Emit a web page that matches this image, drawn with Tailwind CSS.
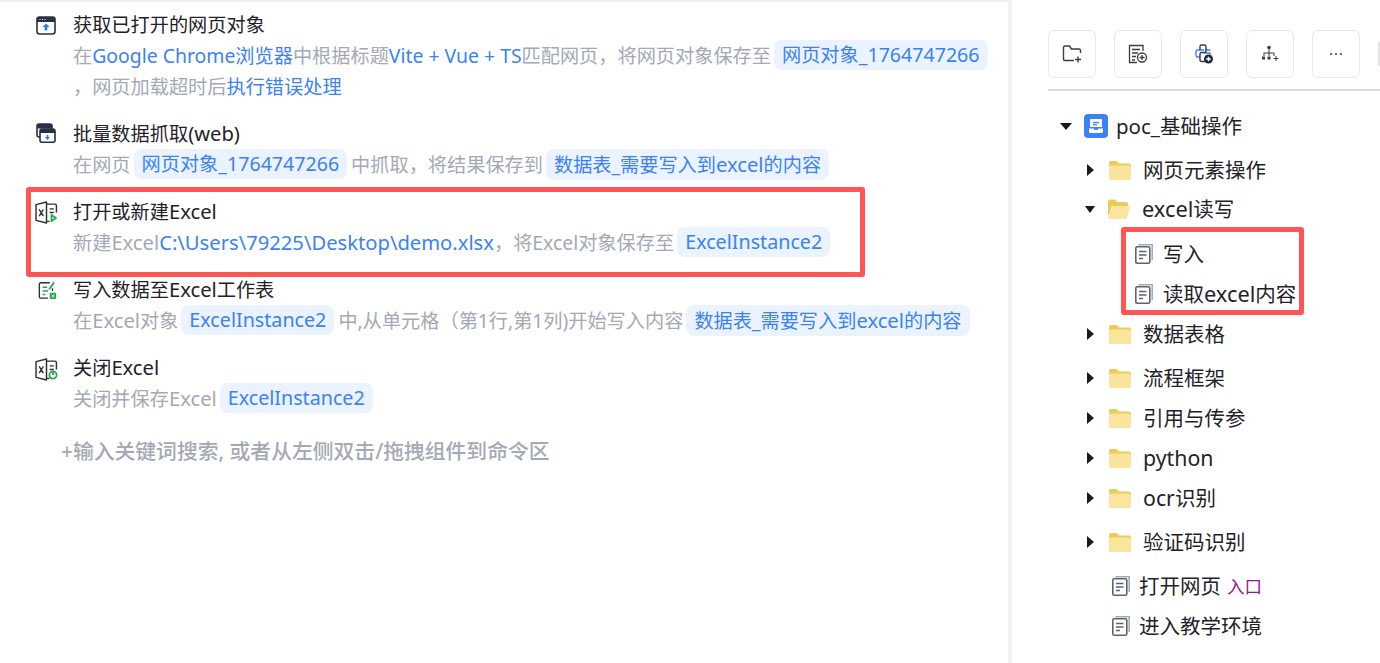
<!DOCTYPE html>
<html lang="en">
<head>
    <meta charset="UTF-8">
    <title>流程编辑器</title>
    <script src="https://cdn.jsdelivr.net/npm/@tailwindcss/browser@4"></script>
</head>
<body class="bg-white overflow-hidden font-['Noto_Sans','Noto_Sans_CJK_SC',sans-serif]">
    <svg width="0" height="0" class="absolute">
        <defs>
            <symbol id="folder" viewBox="0 0 22 20">
                <path d="M0 3a2 2 0 0 1 2-2h6l2 2.500h10a2 2 0 0 1 2 2V7H0z" fill="#ecca5c"/>
                <path d="M0 5.500h20a2 2 0 0 1 2 2V18a2 2 0 0 1-2 2H2a2 2 0 0 1-2-2z" fill="#fbe49c"/>
            </symbol>
            <symbol id="folderOpen" viewBox="0 0 22 20">
                <path d="M0 2.500a2 2 0 0 1 2-2h5l2 2.500h9a2 2 0 0 1 2 2V7H4L1 16H0z" fill="#ecca5c"/>
                <path d="M5 7h15.500a1.500 1.500 0 0 1 1.400 2L19 18.500a2 2 0 0 1-2 1.500H0z" fill="#fbe49c"/>
            </symbol>
            <symbol id="doc" viewBox="0 0 18 20">
                <path d="M3.500.8h13.700V16" fill="none" stroke="#a2a8b0" stroke-width="1.500"/>
                <rect x=".8" y="2.800" width="14" height="16.400" rx="1.500" fill="#fff" stroke="#5b6470" stroke-width="1.600"/>
                <path d="M4 7.500h7.500M4 11h7.500M4 14.500h4" stroke="#5b6470" stroke-width="1.300"/>
            </symbol>
            <symbol id="excelBook" viewBox="0 0 22 22">
                <path d="M1 3.500 11 1v20L1 18.500z" fill="#fff" stroke="#2b2f36" stroke-width="1.400" stroke-linejoin="round"/>
                <path d="M11 3h8a1.500 1.500 0 0 1 1.500 1.500V11M11 19.500h3" fill="none" stroke="#2b2f36" stroke-width="1.400"/>
                <path d="m4 8 4 6.500M8 8l-4 6.500M14 7.500h4M14 11h4" fill="none" stroke="#2b2f36" stroke-width="1.300"/>
            </symbol>
        </defs>
    </svg>

    <div class="flex h-[663px] w-[1380px]">
        <!-- command list -->
        <div class="relative w-[1008px] shrink-0 border-t-2 border-[#eeeff2] text-[19.200px]">
            <div class="pl-[73px] pr-3 pt-[8px] leading-[31px]">
                <div class="relative pb-[16px]">
                    <svg class="absolute -left-[37px] top-[6px]" width="20" height="20" viewBox="0 0 20 20">
                        <rect x="1" y="1" width="18" height="17" rx="2.500" fill="#fff" stroke="#2b2f45" stroke-width="1.600"/>
                        <path d="M1 2.500a1.500 1.500 0 0 1 1.500-1.500h15a1.500 1.500 0 0 1 1.500 1.500V6H1z" fill="#2b2f45"/>
                        <path d="M3.500 3.500h1M6 3.500h1M8.500 3.500h1" stroke="#fff"/>
                        <path d="m10 7.500 3.500 3.500H11.300v3.500H8.700V11H6.500z" fill="#1f7cf6"/>
                    </svg>
                    <div class="text-[#1f2329] h-[30px] leading-[30px]">获取已打开的网页对象</div>
                    <div class="whitespace-nowrap text-[#a3a9b5]">在<span class="text-[#3b82f6]"><span class="text-[19.400px]">Google Chrome</span>浏览器</span>中根据标题<span class="text-[#3b82f6] text-[19.400px]">Vite + Vue + TS</span>匹配网页，将网页对象保存至<span class="ml-[3px] mr-[4px] inline-block align-top rounded-lg bg-[#eaf3ff] px-2 text-[#3b82f6] leading-[30px]">网页对象<span class="text-[19.600px]">_1764747266</span></span></div>
                    <div class="text-[#a3a9b5]">，网页加载超时后<span class="text-[#3b82f6]">执行错误处理</span></div>
                </div>
                <div class="relative pb-[16px]">
                    <svg class="absolute -left-[37px] top-[5px]" width="20" height="20" viewBox="0 0 20 20">
                        <rect x="1" y="1" width="15" height="13" rx="2" fill="#fff" stroke="#2b2f45" stroke-width="1.600"/>
                        <path d="M1 3a2 2 0 0 1 2-2h11a2 2 0 0 1 2 2v2.500H1z" fill="#2b2f45"/>
                        <rect x="4" y="6" width="15" height="13.200" rx="2" fill="#fff" stroke="#2b2f45" stroke-width="1.600"/>
                        <path d="M4 8a2 2 0 0 1 2-2h11a2 2 0 0 1 2 2v2H4z" fill="#2b2f45"/>
                        <path d="m11.500 17-2.500-3h1.700v-2h1.600v2H14z" fill="#1f7cf6"/>
                    </svg>
                    <div class="text-[#1f2329] h-[31px] leading-[30px]">批量数据抓取<span class="text-[20.200px]">(web)</span></div>
                    <div class="text-[#a3a9b5]">在网页<span class="ml-[3px] mr-[4px] inline-block align-top rounded-lg bg-[#eaf3ff] px-2 text-[#3b82f6] leading-[30px]">网页对象<span class="text-[19.600px]">_1764747266</span></span>中抓取，将结果保存到<span class="ml-[3px] mr-[4px] inline-block align-top rounded-lg bg-[#eaf3ff] px-2 text-[#3b82f6] leading-[30px]">数据表_需要写入到<span class="text-[20.200px]">excel</span>的内容</span></div>
                </div>
                <div class="relative pb-[16px]">
                    <svg class="absolute -left-[38px] top-[5px]" width="23" height="23" viewBox="0 0 23 23">
                        <use href="#excelBook"/>
                        <path d="M16.500 14v6l4.500-3z" fill="#fff" stroke="#22a94f" stroke-width="1.800" stroke-linejoin="round"/>
                    </svg>
                    <div class="text-[#1f2329] h-[31px] leading-[30px]">打开或新建<span class="text-[20.200px]">Excel</span></div>
                    <div class="text-[#a3a9b5]">新建<span class="text-[20.200px]">Excel</span><span class="text-[#3b82f6] text-[20.200px]">C:\Users\79225\Desktop\demo.xlsx</span>，将<span class="text-[19.400px]">Excel</span>对象保存至<span class="ml-[3px] mr-[4px] inline-block align-top rounded-lg bg-[#eaf3ff] px-2 text-[#3b82f6] leading-[30px] text-[19.700px]">ExcelInstance2</span></div>
                </div>
                <div class="relative pb-[16px]">
                    <svg class="absolute -left-[35px] top-[6px]" width="19" height="20" viewBox="0 0 21 22">
                        <path d="M13 3H3a1.500 1.500 0 0 0-1.500 1.500v14A1.500 1.500 0 0 0 3 20h8M16 9v3" fill="none" stroke="#2b2f36" stroke-width="1.500"/>
                        <path d="M5 8h5M5 12h6M5 16h3" stroke="#22a94f" stroke-width="1.600"/>
                        <path d="m12 9 5-7 1.500 1.200-5 7-2 .8z" fill="#22a94f"/>
                        <rect x="13" y="14" width="7" height="7" rx="1" fill="#22a94f"/>
                        <path d="m15 16 3 3.200m0-3.200-3 3.200" stroke="#fff"/>
                    </svg>
                    <div class="text-[#1f2329] h-[31px] leading-[30px]">写入数据至<span class="text-[20.200px]">Excel</span>工作表</div>
                    <div class="text-[#a3a9b5]">在<span class="text-[20.200px]">Excel</span>对象<span class="ml-[3px] mr-[4px] inline-block align-top rounded-lg bg-[#eaf3ff] px-2 text-[#3b82f6] leading-[30px] text-[19.700px]">ExcelInstance2</span>中,从单元格（第1行,第1列)开始写入内容<span class="ml-[3px] mr-[4px] inline-block align-top rounded-lg bg-[#eaf3ff] px-2 text-[#3b82f6] leading-[30px]">数据表_需要写入到<span class="text-[20.200px]">excel</span>的内容</span></div>
                </div>
                <div class="relative pb-[16px]">
                    <svg class="absolute -left-[38px] top-[6px]" width="23" height="23" viewBox="0 0 23 23">
                        <use href="#excelBook"/>
                        <circle cx="18" cy="17" r="3.600" fill="#fff" stroke="#22a94f" stroke-width="1.800"/>
                        <path d="M18 13v4" stroke="#22a94f" stroke-width="1.800"/>
                    </svg>
                    <div class="text-[#1f2329] h-[31px] leading-[30px]">关闭<span class="text-[20.200px]">Excel</span></div>
                    <div class="text-[#a3a9b5]">关闭并保存<span class="text-[20.200px]">Excel</span><span class="ml-[3px] mr-[4px] inline-block align-top rounded-lg bg-[#eaf3ff] px-2 text-[#3b82f6] leading-[30px] text-[19.700px]">ExcelInstance2</span></div>
                </div>
            </div>
            <div class="pl-[61px] pt-[6px] text-[20.800px] font-medium text-[#a3a9b5] leading-[31px]">+输入关键词搜索, 或者从左侧双击/拖拽组件到命令区</div>

            <!-- highlight box -->
            <div class="absolute left-[26px] top-[185px] h-[90px] w-[839px] rounded-[3px] border-[5px] border-[#ff5555]"></div>
        </div>

        <div class="w-[4px] shrink-0 bg-[#f3f3f3]"></div>

        <!-- project tree -->
        <div class="relative min-w-0 flex-1 pl-[36px] pt-[30px]">
            <div class="flex gap-[18px] border-b-2 border-[#dcdcdc] pb-[11px] w-[332px] overflow-hidden">
                <div class="flex h-[48px] w-[48px] shrink-0 items-center justify-center rounded-md border border-[#e8e8e8]">
                    <svg width="20" height="20" viewBox="0 0 20 20" fill="none" stroke="#3a3d42" stroke-width="1.400"><path d="M18.500 9V6.500a1.500 1.500 0 0 0-1.500-1.500H9.500L7.500 2H3a1.500 1.500 0 0 0-1.500 1.500V15A1.500 1.500 0 0 0 3 16.500h9"/><path d="M16 12.500v6M13 15.500h6"/></svg>
                </div>
                <div class="flex h-[48px] w-[48px] shrink-0 items-center justify-center rounded-md border border-[#e8e8e8]">
                    <svg width="20" height="20" viewBox="0 0 20 20" fill="none" stroke="#3a3d42" stroke-width="1.300"><path d="M15 7V1.500H1.500v17H9"/><path d="M4 5.500h8M4 9h6M4 12.500h4M4 16h3"/><circle cx="14" cy="13.500" r="4.500"/><path d="M14 11v5M11.500 13.500h5"/></svg>
                </div>
                <div class="flex h-[48px] w-[48px] shrink-0 items-center justify-center rounded-md border border-[#e8e8e8]">
                    <svg width="20" height="20" viewBox="0 0 20 20" fill="none" stroke-width="1.400"><path d="M10 6H3.500A1.500 1.500 0 0 0 2 7.500v4A1.500 1.500 0 0 0 3.500 13H6" stroke="#3b82f6"/><path d="M10 9h5a1.500 1.500 0 0 1 1.500 1.500M11 6h5.500" stroke="#3b82f6"/><path d="M6 6V2.500A1.500 1.500 0 0 1 7.500 1h3A1.500 1.500 0 0 1 12 2.500V7a1.500 1.500 0 0 1-1.500 1.500h-3A1.500 1.500 0 0 0 6 10v6a1.500 1.500 0 0 0 1.500 1.500H11" stroke="#3a3d42"/><circle cx="14.500" cy="15" r="4.500" fill="#25282c"/><path d="M14.500 12.700v4.600M12.200 15h4.600" stroke="#fff"/></svg>
                </div>
                <div class="flex h-[48px] w-[48px] shrink-0 items-center justify-center rounded-md border border-[#e8e8e8]">
                    <svg width="18" height="18" viewBox="0 0 18 18" fill="#3a3d42"><circle cx="8" cy="2.500" r="1.800"/><path d="M7.500 4h1v3.500h-1zM2.500 7.500h11v1h-11zM2.500 8h1v3h-1zM7.500 8h1v3h-1zM12.500 8h1v3h-1z"/><rect x="1" y="11.500" width="3" height="3" rx=".5"/><rect x="6.500" y="11.500" width="3" height="3" rx=".5"/><path d="M12.500 13h5v1h-5z"/><path d="M14.500 11h1v5h-1z"/></svg>
                </div>
                <div class="flex h-[48px] w-[48px] shrink-0 items-center justify-center rounded-md border border-[#e8e8e8]">
                    <svg width="14" height="4" viewBox="0 0 14 4" fill="#3a3d42"><circle cx="2" cy="2" r="1"/><circle cx="7" cy="2" r="1"/><circle cx="12" cy="2" r="1"/></svg>
                </div>
                <div class="mt-3 h-[24px] w-[4px] shrink-0 bg-[#e4e4e4]"></div>
            </div>

            <div class="pl-[10px] pt-[17px] text-[20.500px] text-[#1f2329] whitespace-nowrap">
                <div class="mb-[8px] flex h-[36px] items-center">
                    <span class="ml-[2px] h-0 w-0 border-x-[6px] border-t-[7px] border-x-transparent border-t-[#1a1a1a]"></span>
                    <span class="ml-[12px] flex h-[24px] w-[24px] items-center justify-center rounded-[4px] bg-[#3b82f6]">
                        <svg width="16" height="16" viewBox="0 0 16 16" fill="#fff"><path d="M3 1h10a1 1 0 0 1 1 1v7H2V2a1 1 0 0 1 1-1z"/><path d="M1 10.500h4.500l1 1.500h3l1-1.500H15V14a1 1 0 0 1-1 1H2a1 1 0 0 1-1-1z"/><path d="M5 4h6v1.200H5zM5 6.300h4v1.200H5z" fill="#3b82f6"/></svg>
                    </span>
                    <span class="ml-[8px]">poc_基础操作</span>
                </div>
                <div class="mb-[3px] flex h-[36px] items-center pl-[29px]">
                    <span class="h-0 w-0 border-y-[6px] border-l-[7px] border-y-transparent border-l-[#1a1a1a]"></span>
                    <svg class="ml-[15px]" width="22" height="20"><use href="#folder"/></svg>
                    <span class="ml-[12px]">网页元素操作</span>
                </div>
                <div class="mb-[9px] flex h-[36px] items-center pl-[27px]">
                    <span class="h-0 w-0 border-x-[5.500px] border-t-[7px] border-x-transparent border-t-[#1a1a1a]"></span>
                    <svg class="ml-[13px]" width="22" height="20"><use href="#folderOpen"/></svg>
                    <span class="ml-[12px]"><span class="text-[21.800px]">excel</span>读写</span>
                </div>
                <div class="mb-[4px] flex h-[36px] items-center pl-[77px]">
                    <svg width="18" height="20"><use href="#doc"/></svg>
                    <span class="ml-[10px]">写入</span>
                </div>
                <div class="mb-[4px] flex h-[36px] items-center pl-[77px]">
                    <svg width="18" height="20"><use href="#doc"/></svg>
                    <span class="ml-[10px]">读取<span class="text-[21.800px]">excel</span>内容</span>
                </div>
                <div class="mb-[8px] flex h-[36px] items-center pl-[29px]">
                    <span class="h-0 w-0 border-y-[6px] border-l-[7px] border-y-transparent border-l-[#1a1a1a]"></span>
                    <svg class="ml-[15px]" width="22" height="20"><use href="#folder"/></svg>
                    <span class="ml-[12px]">数据表格</span>
                </div>
                <div class="mb-[4px] flex h-[36px] items-center pl-[29px]">
                    <span class="h-0 w-0 border-y-[6px] border-l-[7px] border-y-transparent border-l-[#1a1a1a]"></span>
                    <svg class="ml-[15px]" width="22" height="20"><use href="#folder"/></svg>
                    <span class="ml-[12px]">流程框架</span>
                </div>
                <div class="mb-[4px] flex h-[36px] items-center pl-[29px]">
                    <span class="h-0 w-0 border-y-[6px] border-l-[7px] border-y-transparent border-l-[#1a1a1a]"></span>
                    <svg class="ml-[15px]" width="22" height="20"><use href="#folder"/></svg>
                    <span class="ml-[12px]">引用与传参</span>
                </div>
                <div class="mb-[4px] flex h-[36px] items-center pl-[29px]">
                    <span class="h-0 w-0 border-y-[6px] border-l-[7px] border-y-transparent border-l-[#1a1a1a]"></span>
                    <svg class="ml-[15px]" width="22" height="20"><use href="#folder"/></svg>
                    <span class="ml-[12px] text-[21.300px]">python</span>
                </div>
                <div class="mb-[8px] flex h-[36px] items-center pl-[29px]">
                    <span class="h-0 w-0 border-y-[6px] border-l-[7px] border-y-transparent border-l-[#1a1a1a]"></span>
                    <svg class="ml-[15px]" width="22" height="20"><use href="#folder"/></svg>
                    <span class="ml-[12px]"><span class="text-[21.300px]">ocr</span>识别</span>
                </div>
                <div class="mb-[8px] flex h-[36px] items-center pl-[29px]">
                    <span class="h-0 w-0 border-y-[6px] border-l-[7px] border-y-transparent border-l-[#1a1a1a]"></span>
                    <svg class="ml-[15px]" width="22" height="20"><use href="#folder"/></svg>
                    <span class="ml-[12px]">验证码识别</span>
                </div>
                <div class="mb-[4px] flex h-[36px] items-center pl-[54px]">
                    <svg width="18" height="20"><use href="#doc"/></svg>
                    <span class="ml-[9px]">打开网页</span>
                    <span class="ml-[6px] text-[17.500px] text-[#8a1a9c]">入口</span>
                </div>
                <div class="flex h-[36px] items-center pl-[54px]">
                    <svg width="18" height="20"><use href="#doc"/></svg>
                    <span class="ml-[9px]">进入教学环境</span>
                </div>
            </div>

            <!-- highlight box -->
            <div class="absolute left-[109px] top-[227px] h-[88px] w-[183px] rounded-[3px] border-[5px] border-[#ff5555]"></div>
        </div>
    </div>
</body>
</html>
